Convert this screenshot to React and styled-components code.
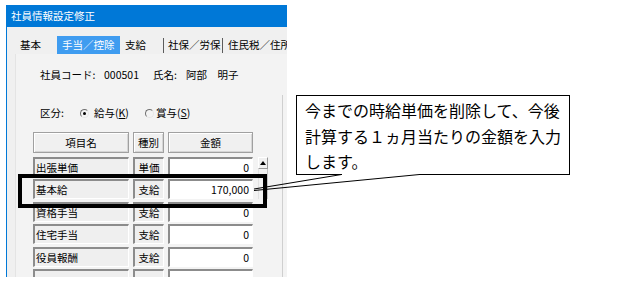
import React from 'react';
import styled, { createGlobalStyle } from 'styled-components';

const GlobalStyle = createGlobalStyle`
  html, body {
    margin: 0;
    padding: 0;
    background: #fff;
  }
  body {
    font-family: "Noto Sans CJK JP", "Liberation Sans", sans-serif;
    color: #000;
  }
`;

const Stage = styled.div`
  position: relative;
  width: 642px;
  height: 285px;
  display: flex;
  align-items: flex-start;
  overflow: hidden;
  background: #fff;
`;

const Window = styled.div`
  margin: 5px 0 0 6px;
  width: 280px;
  height: 272px;
  flex-shrink: 0;
  border-left: 1px solid #0078d7;
  background: #f0f0f0;
  overflow: hidden;
  display: flex;
  flex-direction: column;
`;

const TitleBar = styled.div`
  height: 22px;
  line-height: 22px;
  padding-left: 4px;
  background: #0078d7;
  color: #fff;
  font-size: 10.5px;
  white-space: nowrap;
`;

const TabRow = styled.div`
  display: flex;
  margin: 9px 0 0 8px;
  height: 18px;
  white-space: nowrap;
`;

const Tab = styled.div`
  flex-shrink: 0;
  width: ${p => p.$w}px;
  height: 18px;
  line-height: 18px;
  padding-left: ${p => (p.$pad === undefined ? 5 : p.$pad)}px;
  margin-left: ${p => p.$ml || 0}px;
  box-sizing: border-box;
  font-size: 10.5px;
  background: ${p => (p.$active ? '#3f9cf0' : 'transparent')};
  color: ${p => (p.$active ? '#fff' : '#000')};
`;

const TabSep = styled.div`
  flex-shrink: 0;
  width: 1px;
  height: 15px;
  margin: 2px ${p => p.$mr}px 0 0;
  background: #5c5c5c;
`;

const Panel = styled.div`
  flex: 1;
  display: flex;
  margin-left: 8px;
  border-left: 1px solid #e4e4e4;
  background: #f3f3f3;
`;

const PanelMain = styled.div`
  width: 266px;
  flex-shrink: 0;
  padding-top: 14px;
`;

const RightRule = styled.div`
  width: 4px;
  margin-top: 41px;
  border-left: 1px solid #cfcfcf;
`;

const InfoRow = styled.div`
  display: flex;
  align-items: center;
  height: 14px;
  line-height: 14px;
  padding-left: 24px;
  margin-top: ${p => p.$mt || 0}px;
  font-size: 10.5px;
  white-space: nowrap;
`;

const Field = styled.span`
  flex-shrink: 0;
  width: ${p => (p.$w ? `${p.$w}px` : 'auto')};
`;

const Radio = styled.span`
  position: relative;
  flex-shrink: 0;
  width: 7px;
  height: 7px;
  border-radius: 50%;
  border: 1px solid;
  border-color: #6f6f6f #e6e6e6 #e6e6e6 #6f6f6f;
  margin-right: ${p => p.$mr}px;

  &::after {
    content: '';
    display: ${p => (p.$checked ? 'block' : 'none')};
    position: absolute;
    left: 2px;
    top: 2px;
    width: 3px;
    height: 3px;
    border-radius: 50%;
    background: #000;
  }
`;

const Key = styled.span`
  text-decoration: underline;
`;

const Table = styled.div`
  display: grid;
  grid-template-columns: 96px 31px 85px 11px;
  grid-template-rows: 22.6px repeat(6, 20px);
  column-gap: 4px;
  row-gap: 2.4px;
  margin: 12px 0 0 17px;
`;

const HeadCell = styled.div`
  align-self: start;
  height: 21px;
  box-sizing: border-box;
  border: 1px solid #a0a0a0;
  box-shadow: inset 1px 1px 0 #fff, inset -1px -1px 0 #d6d6d6;
  background: #f0f0f0;
  font-size: 10.5px;
  line-height: 19px;
  text-align: center;
`;

const Cell = styled.div`
  height: 20px;
  box-sizing: border-box;
  border-style: solid;
  border-width: 2px 1px 1px 2px;
  border-color: #8c8c8c #fff #fff #8c8c8c;
  background: ${p => (p.$white ? '#fff' : '#efefef')};
  font-size: 10.5px;
  line-height: 17px;
  padding: 0 ${p => (p.$align === 'right' ? 3 : 1)}px;
  text-align: ${p => p.$align || 'left'};
  white-space: nowrap;
  overflow: hidden;
`;

const ScrollCol = styled.div`
  grid-column: 4;
  grid-row: 2 / span 6;
  display: flex;
  flex-direction: column;
  margin-left: 1px;
`;

const UpButton = styled.div`
  height: 12px;
  box-sizing: border-box;
  border: 1px solid;
  border-color: #fff #9a9a9a #9a9a9a #fff;
  background: #f0f0f0;
  display: flex;
  align-items: center;
  justify-content: center;

  &::after {
    content: '';
    width: 0;
    height: 0;
    border-left: 3px solid transparent;
    border-right: 3px solid transparent;
    border-bottom: 4px solid #000;
  }
`;

const Track = styled.div`
  height: 30px;
  border-left: 1px solid #e2e2e2;
  border-right: 1px solid #c4c4c4;
`;

const Highlight = styled.div`
  position: absolute;
  left: 18px;
  top: 174px;
  width: 249px;
  height: 34px;
  box-sizing: border-box;
  border: 4px solid #000;
  pointer-events: none;
`;

const Callout = styled.div`
  flex-shrink: 0;
  margin: 95px 0 0 9px;
  width: 274px;
  height: 80px;
  box-sizing: border-box;
  border: 1px solid #000;
  background: #fff;
  padding: 2px 0 0 8px;
  font-size: 16px;
  line-height: 25.5px;
  white-space: nowrap;
`;

const Pointer = styled.svg`
  position: absolute;
  left: 0;
  top: 0;
  pointer-events: none;
`;

const rows = [
  { name: '出張単価', kind: '単価', amount: '0' },
  { name: '基本給', kind: '支給', amount: '170,000' },
  { name: '資格手当', kind: '支給', amount: '0' },
  { name: '住宅手当', kind: '支給', amount: '0' },
  { name: '役員報酬', kind: '支給', amount: '0' },
  { name: '', kind: '', amount: '' },
];

export default function App() {
  return (
    <>
      <GlobalStyle />
      <Stage>
        <Window>
          <TitleBar>社員情報設定修正</TitleBar>
          <TabRow>
            <Tab $w={41}>基本</Tab>
            <Tab $w={63} $ml={1} $active>手当／控除</Tab>
            <Tab $w={43}>支給</Tab>
            <TabSep $mr={4} />
            <Tab $w={54} $pad={0}>社保／労保</Tab>
            <TabSep $mr={5} />
            <Tab $w={80} $pad={0}>住民税／住所</Tab>
          </TabRow>
          <Panel>
            <PanelMain>
              <InfoRow>
                <Field $w={64}>社員コード:</Field>
                <Field $w={49}>000501</Field>
                <Field $w={33}>氏名:</Field>
                <Field>阿部　明子</Field>
              </InfoRow>
              <InfoRow $mt={24}>
                <Field $w={40}>区分:</Field>
                <Radio $checked $mr={5} />
                <Field $w={51}>給与(<Key>K</Key>)</Field>
                <Radio $mr={2} />
                <Field>賞与(<Key>S</Key>)</Field>
              </InfoRow>
              <Table>
                <HeadCell>項目名</HeadCell>
                <HeadCell>種別</HeadCell>
                <HeadCell>金額</HeadCell>
                <div />
                {rows.map((r, i) => (
                  <React.Fragment key={i}>
                    <Cell style={{ gridColumn: 1, gridRow: i + 2 }}>{r.name}</Cell>
                    <Cell style={{ gridColumn: 2, gridRow: i + 2 }} $align="center">{r.kind}</Cell>
                    <Cell style={{ gridColumn: 3, gridRow: i + 2 }} $white $align="right">{r.amount}</Cell>
                  </React.Fragment>
                ))}
                <ScrollCol>
                  <UpButton />
                  <Track />
                </ScrollCol>
              </Table>
            </PanelMain>
            <RightRule />
          </Panel>
        </Window>
        <Callout>
          今までの時給単価を削除して、今後<br />
          計算する１ヵ月当たりの金額を入力<br />
          します。
        </Callout>
        <Highlight />
        <Pointer width="642" height="285" viewBox="0 0 642 285">
          <line x1="342" y1="174.5" x2="419" y2="174.5" stroke="#fff" strokeWidth="1.2" />
          <line x1="341.5" y1="174.5" x2="254" y2="189" stroke="#000" strokeWidth="1" />
          <line x1="419.5" y1="174.5" x2="254" y2="190.5" stroke="#000" strokeWidth="1" />
        </Pointer>
      </Stage>
    </>
  );
}
